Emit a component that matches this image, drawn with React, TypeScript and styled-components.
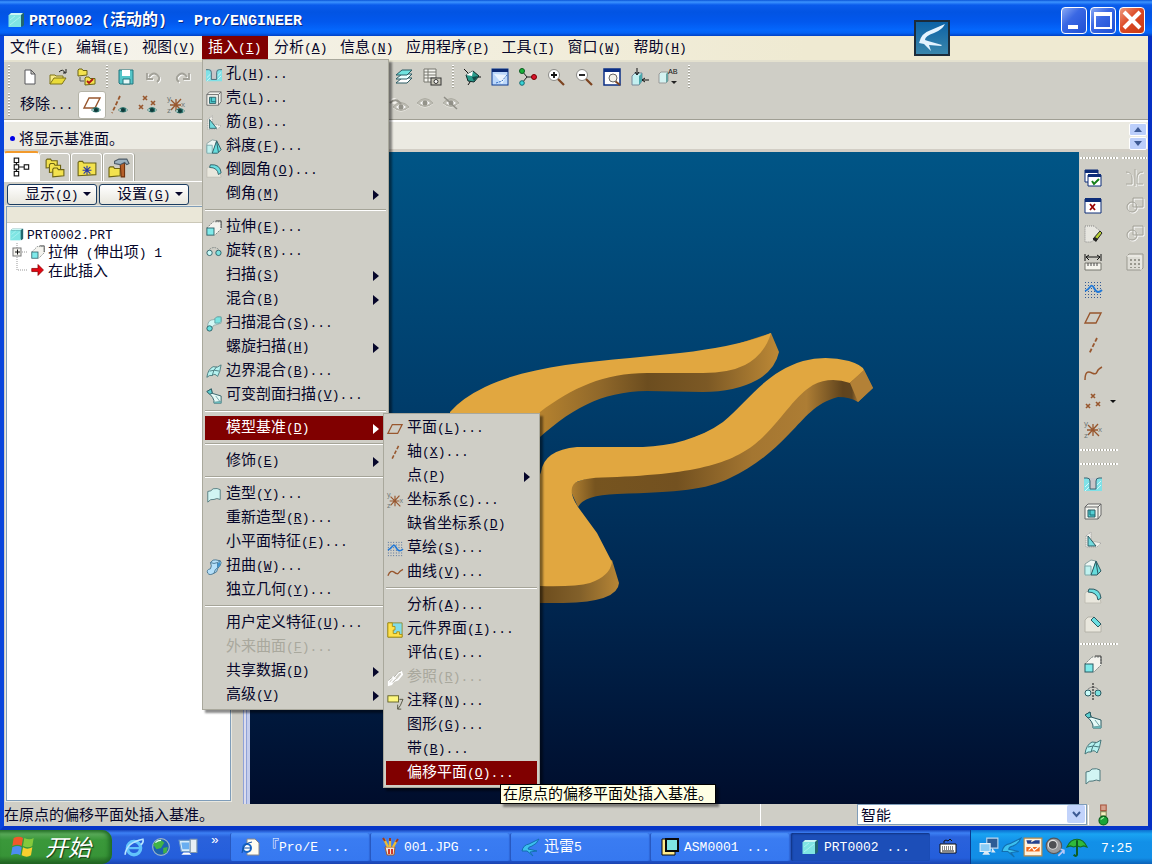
import React from "react";
import styled, { createGlobalStyle, css } from "styled-components";

const face = "#cfcec6";
const maroon = "#800000";
const ink = "#06062a";

const GlobalStyle = createGlobalStyle`
  * { box-sizing: border-box; }
  body {
    margin: 0;
    background: ${face};
    color: ${ink};
    font-family: "Noto Sans CJK SC", sans-serif;
    font-size: 15px;
    line-height: 20px;
  }
  button, select { font: inherit; color: inherit; margin: 0; padding: 0; border: 0; background: none; }
  ul { list-style: none; margin: 0; padding: 0; }
  svg { display: block; flex: none; }
`;

/* ---------- text with half-width latin and underlined access keys ---------- */

const Latin = styled.span<{ $size?: number }>`
  font-family: "Liberation Mono", monospace;
  font-size: ${(p) => p.$size ?? 13}px;
  white-space: pre;
`;

function Label({ text, size }: { text: string; size?: number }) {
  const runs = text.split(/([\u3001-\uffef]+)/).filter(Boolean);
  return (
    <span>
      {runs.map((run, i) => {
        if (/^[\u3001-\uffef]/.test(run)) return run;
        const at = run.indexOf("&");
        return (
          <Latin key={i} $size={size}>
            {at < 0 ? run : (
              <>
                {run.slice(0, at)}
                <u>{run[at + 1]}</u>
                {run.slice(at + 2)}
              </>
            )}
          </Latin>
        );
      })}
    </span>
  );
}

/* ---------- icons, all on an 18 unit grid ---------- */

const teal = "#7fe5e3";
const line = "#2b5a62";
const brown = "#98572e";
const eye = (x: number, y: number) => (
  <g>
    <path d={`M${x - 5} ${y}q5-6 10 0q-5 5-10 0z`} fill="#2f7770" />
    <circle cx={x} cy={y} r="2" fill="#103a3a" />
    <path d={`M${x - 4} ${y}h2M${x + 3} ${y}h1`} stroke="#fff" />
  </g>
);
const greyEye = (x: number, y: number) => (
  <g>
    <path d={`M${x - 8} ${y + 1}q8-9 16 0q-8 7-16 0z`} fill="#f4f3ee" />
    <path d={`M${x - 8} ${y}q8-9 16 0q-8 7-16 0z`} fill="#bdbcb3" stroke="#aeada3" />
    <path d={`M${x - 5} ${y}l3-2v4zM${x + 5} ${y}l-3-2v4z`} fill="#fff" />
    <circle cx={x} cy={y} r="2.500" fill="#94938a" />
  </g>
);
const cross = (x: number, y: number) => (
  <path d={`M${x - 2} ${y - 2}l4 4m0-4l-4 4`} stroke={brown} strokeWidth="1.600" />
);
const dots = (
  <g fill="#375c95">
    {[1, 4, 7, 10, 13, 16].flatMap((x) => [1, 4, 7, 10, 13, 16].map((y) => <rect key={`${x}-${y}`} x={x} y={y} width="1" height="1" />))}
  </g>
);
const folder = (x: number, y: number, w = 10, h = 7) => (
  <path d={`M${x} ${y + h}v-${h + 1}l1-1h3l1 1.500h${w - 5}v${h - 0.5}z`} fill="#f3e24e" stroke="#6d6414" />
);
const axisLetter = { fontFamily: "Liberation Sans, sans-serif", fontSize: 8, fill: "#6f7a7a" };
const csys = (
  <g fill="none">
    <path d="M4 4l11 11M14 3L4 14M3 9h11M9 3v12" stroke={brown} strokeWidth="1.300" />
    <text x="0" y="5" {...axisLetter}>y</text>
    <text x="14" y="11" {...axisLetter}>x</text>
    <text x="0" y="17" {...axisLetter}>z</text>
  </g>
);

const drawings: Record<string, React.ReactNode> = {
  part: <><path d="M2 4l2-2h13v12l-2 2z" fill="#22686e" /><path d="M2 4l2-2h12l-2 2z" fill="#c9f6f4" /><rect x="1.500" y="4" width="12.500" height="12" fill={teal} /><path d="M3 14L13 6M3 9l5-4" stroke="#a9f3f1" /></>,
  file: <path d="M4 2h6l4 4v10H4zM10 2v4h4" fill="#fff" stroke="#56565a" />,
  open: <><path d="M1 16V7h5l1 1h7v2" fill="#f7ea87" stroke="#7e7418" /><path d="M1 16l4-6h12l-4 6z" fill="#eadb38" stroke="#7e7418" /><path d="M10 4q4-4 6 1M14 5h3V1" fill="none" stroke="#202020" /></>,
  folders: <>{folder(1, 3, 9, 5)}{folder(8, 11, 10, 6)}<path d="M3 9v4h4" stroke="#555" fill="none" /><path d="M10 13l2 2 4-4" stroke="#b01212" strokeWidth="1.800" fill="none" /></>,
  save: <><path d="M2 2h14v14H3l-1-1z" fill="#55c5c8" stroke="#22777f" /><path d="M5 2h8v6H5z" fill="#fff" /><path d="M6 11h7v5H6z" fill="#e6f8f8" stroke="#22777f" /></>,
  undo: <><path d="M5 10q5-7 10 0q1 3-2 5M3 6v6h6" fill="none" stroke="#fff" strokeWidth="1.500" /><path d="M4 9q5-7 10 0q1 3-2 5M2 5v6h6" fill="none" stroke="#a3a299" strokeWidth="1.800" /></>,
  redo: <><path d="M15 10Q10 3 5 10q-1 3 2 5M17 6v6h-6" fill="none" stroke="#fff" strokeWidth="1.500" /><path d="M14 9Q9 2 4 9q-1 3 2 5M16 5v6h-6" fill="none" stroke="#a3a299" strokeWidth="1.800" /></>,
  plane: <path d="M6 4h11l-5 10H1z" fill="none" stroke={brown} strokeWidth="1.400" />,
  planeEye: <><path d="M6 2h11l-5 10H1z" fill="none" stroke={brown} strokeWidth="1.400" />{eye(13, 14)}</>,
  axis: <path d="M13 1L5 17" stroke={brown} strokeWidth="1.800" strokeDasharray="4 2" />,
  axisEye: <><path d="M9 0L1 17" stroke={brown} strokeWidth="1.800" strokeDasharray="4 2" />{eye(12, 14)}</>,
  points: <>{cross(9, 3)}{cross(4, 13)}{cross(14, 11)}</>,
  pointsEye: <>{cross(6, 2)}{cross(2, 11)}{cross(14, 7)}{eye(13, 14)}</>,
  csys,
  csysEye: <>{csys}{eye(13, 15)}</>,
  layers: <g stroke={line}><path d="M1 15l6-5h10l-5 5z" fill="#fff" /><path d="M1 11l6-5h10l-5 5z" fill="#e9ffff" /><path d="M1 7l6-5h10l-5 5z" fill="#6fe3df" /></g>,
  sheet: <><path d="M1 1h12v13H1zM1 4h12M1 7h12M1 10h12M5 1v13" fill="#f5f5f0" stroke="#77776f" /><rect x="8" y="10" width="10" height="7" fill="#c7c6b8" stroke="#333" /><circle cx="13" cy="13.500" r="2" fill="#fff" stroke="#333" /></>,
  spin: <><path d="M1 1l5 5M12 9h6M5 17l4-6" stroke="#111" /><path d="M3 7l7-4 6 5-5 6-6-1z" fill="#2a9a8b" stroke="#102a2a" /><path d="M3 7l7-4-1 5z" fill="#fff" /><path d="M9 9l6-1-4 5z" fill="#124a48" /></>,
  sketchView: <><rect x="1" y="1" width="16" height="16" fill="#bcd8fb" stroke="#0b3a94" /><path d="M1 1h16v3H1z" fill="#0b2a74" /><path d="M3 6l8 10 5-9" fill="#eaf4ff" /><path d="M5 15l6-2 5-6" stroke="#3772c4" fill="none" strokeDasharray="2 1" /></>,
  orient: <><path d="M3 3l5 6-5 6M8 9h8" stroke="#222" fill="none" /><circle cx="3" cy="3" r="2.500" fill="#18b238" stroke="#0b5a20" /><circle cx="15" cy="9" r="2.500" fill="#d8142c" stroke="#700" /><circle cx="3" cy="15" r="2.300" fill="#39d4d8" stroke="#156a70" /></>,
  zoomIn: <><path d="M10 10l7 7" stroke="#7d4420" strokeWidth="2.200" /><circle cx="7" cy="7" r="5.500" fill="#fff" stroke="#8c8c88" /><path d="M4 7h6M7 4v6" stroke="#111" strokeWidth="1.800" /></>,
  zoomOut: <><path d="M10 10l7 7" stroke="#7d4420" strokeWidth="2.200" /><circle cx="7" cy="7" r="5.500" fill="#fff" stroke="#8c8c88" /><path d="M4 7h6" stroke="#111" strokeWidth="1.800" /></>,
  refit: <><rect x="1" y="1" width="16" height="16" fill="#fff" stroke="#0b2f86" strokeWidth="1.500" /><path d="M1 1h16v3H1z" fill="#0b2f86" /><path d="M12 13l5 4" stroke="#7d4420" strokeWidth="2" /><circle cx="10" cy="10" r="4" fill="#f2f2ea" stroke="#666" /></>,
  reorient: <><path d="M1 8l3-3h7v8l-3 4H1z" fill="#c3eff0" stroke="#789" /><path d="M8 8l3-3v8l-3 4z" fill="#4aa7aa" /><path d="M6 0v6M4 4l2 3 2-3M18 12h-6M14 10l-3 2 3 2" fill="none" stroke="#111" /></>,
  saved: <><path d="M0 6l2-2h7v9l-2 2H0z" fill="#d4f2f1" stroke="#999" /><path d="M7 6l2-2v9l-2 2z" fill="#69a5a4" /><text x="9" y="6" fontFamily="Liberation Mono, monospace" fontSize="8" fill="#222">AB</text><path d="M12 13h6l-3 3z" fill="#222" /></>,
  people: <>{greyEye(11, 11)}<circle cx="4" cy="5" r="3" fill="#f4f3ee" /><path d="M0 7q6-6 11 1" fill="none" stroke="#99988f" strokeWidth="2" /></>,
  eyeGrey: greyEye(9, 7),
  eyeOff: <>{greyEye(9, 7)}<path d="M2 1l13 12" stroke="#8f8e86" strokeWidth="1.500" /></>,
  tree: <g fill="#fff" stroke="#111"><path d="M4 4v9M4 9h7" /><rect x="2" y="1" width="4" height="4" /><rect x="2" y="7" width="4" height="4" /><rect x="2" y="13" width="4" height="4" /><rect x="11" y="7" width="4" height="4" /></g>,
  stack: <>{folder(1, 3, 10, 6)}{folder(4, 7, 10, 6)}{folder(7, 11, 10, 6)}</>,
  favorite: <>{folder(1, 5, 16, 11)}<path d="M9 7v8M5 11h8M6 8l6 6M12 8l-6 6" stroke="#2637a8" /></>,
  hammer: <>{folder(0, 10, 10, 7)}<path d="M10 5h4v12h-3z" fill="#b5602a" stroke="#70330f" /><path d="M5 3l4-2h7l2 4-2 1-2-2-4 2-5-1z" fill="#9db2c0" stroke="#4c5a66" /></>,
  hole: <><path d="M0 3h6v13H0zM12 3h6v13h-6zM6 14h6v2H6z" fill="#7fe1e7" /><path d="M1 12l4-4M1 16l4-4M13 10l4-4M13 14l4-4" stroke="#d5f8fa" /><path d="M3 3q3 0 3 3v8h6V6q0-3 3-3z" fill="#c8c6c9" /><path d="M0 3h3q3 0 3 3v8h6V6q0-3 3-3h3" stroke="#3c6270" /></>,
  shell: <><path d="M1 4l3-3h13v11l-3 4H1z" fill="#f1f2ec" stroke="#666" /><path d="M1 4h13v12M14 4l3-3" fill="none" stroke="#666" /><path d="M4 7h7v7H4z" fill="#54cfd3" stroke="#2b5a62" /><path d="M6 7v5h5" fill="none" stroke="#1b6d75" /></>,
  rib: <><path d="M2 5l5-4v9l10 2-4 4H2z" fill="#f2f1eb" stroke="#999" strokeDasharray="1 1" /><path d="M4 5v10h8z" fill="#74dbde" stroke={line} /></>,
  draft: <><path d="M1 5l6-4 5 1-4 13H1z" fill="#eef6f3" stroke="#8aa2a2" /><path d="M1 7h6v9H1z" fill="#bff1ef" stroke="#7da9aa" /><path d="M7 16L12 2l5 10-4 4z" fill="#66dcdc" stroke={line} strokeLinejoin="round" /><path d="M12 3l2 12" stroke={line} /></>,
  round: <><path d="M1 6l4-3q9-1 11 8l1 5H1z" fill="#e9e7dd" stroke="#c0beb4" /><path d="M5 2q11-1 12 9l-3 2Q13 5 4 5z" fill="#6cdfe2" stroke={line} strokeLinejoin="round" /></>,
  chamfer: <><path d="M1 5l3-3h6l7 7v8H1z" fill="#e9e7dd" stroke="#b4b2a8" /><path d="M10 2l7 7-3 3-7-7z" fill="#6cdfe2" stroke={line} /></>,
  extrude: <><path d="M1 9l7-7h9v8l-7 7" fill="#f4f3ee" stroke="#78807e" strokeDasharray="2 1" /><path d="M11 1h6v8" fill="none" stroke="#444" /><rect x="1" y="9" width="8" height="8" fill="#7feaea" stroke={line} /></>,
  revolve: <><circle cx="4" cy="10" r="3" fill="#c9fbf9" stroke={line} /><circle cx="14" cy="10" r="3" fill="#7be1df" stroke={line} /><path d="M4 6q5-4 10 0" fill="none" stroke="#77807e" strokeDasharray="2 1" /></>,
  revolveAxis: <><circle cx="4" cy="10" r="3" fill="#c9fbf9" stroke={line} /><circle cx="14" cy="10" r="3" fill="#7be1df" stroke={line} /><path d="M4 6q5-4 10 0" fill="none" stroke="#888" /><path d="M9 0v18" stroke="#111" strokeDasharray="2 1" /></>,
  sweptBlend: <><path d="M2 13Q1 4 9 4l5-3 3 1v6l-6 2q-4 0-5 6z" fill="#d4f8f5" stroke="#8fa8a8" /><path d="M10 3l2-2h5v5l-2 2h-5z" fill="#79e4e1" stroke="#5e9c9e" /><circle cx="4" cy="14" r="3" fill="#66e0df" stroke={line} /></>,
  boundary: <><path d="M1 15q1-9 7-12 5 2 9-2-1 8-4 13-3-4-6-1-3-1-6 2z" fill="#b5f2f0" stroke="#44767a" strokeLinejoin="round" /><path d="M4 8q5-2 11 0M12 3q-4 4-5 10" stroke="#44767a" /></>,
  varSweep: <><path d="M1 4l5-3 1 5 10 3v8H9q1-6-8-13z" fill="#e5f9f6" stroke={line} strokeLinejoin="round" /><path d="M1 4l5-3 1 5-3 1z" fill="#5ccfd0" stroke={line} strokeLinejoin="round" /><path d="M9 16l8-1v2H9zM11 9l6 8" fill="#5ccfd0" stroke="#6fa3a5" /></>,
  style: <path d="M2 5q4 0 6-3 5-1 8 1v11q-4-2-7 0-4-1-7 3z" fill="#d1f5f3" stroke="#4f787c" strokeLinejoin="round" />,
  warp: <><path d="M5 4q3-4 6-3l5 1q2 2 0 5l-3 4q0 4-4 5-5 3-7 0-2-4 3-5 2-3 0-7z" fill="#b5e0fa" stroke="#42718e" strokeLinejoin="round" /><path d="M5 4q4 2 8 0l3-2M13 4v6q-3 1-4 6" fill="none" stroke="#42718e" /><path d="M13 5l3-2v4l-3 3z" fill="#3f93ce" /></>,
  sketch: <>{dots}<path d="M1 10q3-1 5-4t4 1 4 4 4-2" fill="none" stroke="#1f78d8" strokeWidth="1.800" /></>,
  curve: <path d="M1 12q3-7 7-4t5 1 5-4" fill="none" stroke={brown} strokeWidth="1.500" />,
  curveTall: <path d="M1 15q0-11 7-7 4 2 5-1t5-5" fill="none" stroke={brown} strokeWidth="1.500" />,
  component: <><path d="M1 1h16v16H1z" fill="#7fdcea" stroke="#8e8a2a" /><path d="M1 1h5v4h3v4H7v4h4v-2h3v3h3v3H1z" fill="#ffe14a" stroke="#a58c12" /></>,
  link: <g fill="none"><path d="M3 16l5-6M8 9l5-6 3-1 1 3-5 6-3 1zM2 12l5-4 2 2-4 6-3 1z" stroke="#fff" strokeWidth="2" /><path d="M1 12l5-4M8 8l5-6 3-1M6 14l4-4" stroke="#aaa99f" /></g>,
  note: <><rect x="1" y="2" width="12" height="7" fill="#fdf77e" stroke="#5b5b22" /><path d="M14 6h4l-3 7-3 4M12 12v5h4" fill="none" stroke="#4d4d3a" /></>,
  windows: <><path d="M1 1h13v12H1z" fill="#fff" stroke="#0d2d78" /><path d="M1 1h13v3H1z" fill="#0d2d78" /><path d="M4 6h13v11H4z" fill="#fff" stroke="#0d2d78" /><path d="M4 5h13v3H4z" fill="#0d2d78" /><path d="M8 12l2 3 5-5" fill="none" stroke="#168018" strokeWidth="2" /></>,
  closeWin: <><path d="M1 2h16v14H1z" fill="#fff" stroke="#0d2d78" /><path d="M1 1h16v4H1z" fill="#0d2d78" /><path d="M6 7l5 6m0-6l-5 6" stroke="#900" strokeWidth="1.800" /></>,
  erase: <><path d="M1 1h9l6 5-3 7-6 4H1z" fill="#e7e6e0" stroke="#888" strokeDasharray="1 1" /><path d="M9 14l7-8 2 2-6 8z" fill="#b6cf31" stroke="#222" /><path d="M9 14l2-2 3 2-2 3z" fill="#222" /></>,
  measure: <><path d="M1 1v7M17 1v7M2 4h14M5 2L2 4l3 3M13 2l3 2-3 3" stroke="#111" fill="none" /><path d="M1 10h16v7H1z" fill="#f6f5ee" stroke="#77776f" /><path d="M4 10v3M7 10v3M10 10v3M13 10v3" stroke="#444" /></>,
  mirror: <g fill="none"><path d="M1 4q6 0 6 6v6H1M18 4q-6 0-6 6v6h6M10 1v17" stroke="#fff" /><path d="M0 3q6 0 6 6v6H0M17 3q-6 0-6 6v6h6M9 0v17" stroke="#aaa99f" /></g>,
  merge: <g fill="none"><circle cx="7" cy="11" r="5" stroke="#fff" /><path d="M8 2h10v9H8z" stroke="#fff" /><circle cx="6" cy="10" r="5" stroke="#a3a299" /><path d="M7 1h10v9H7z" stroke="#a3a299" /></g>,
  pattern: <><path d="M1 3l2-2h14v14l-2 2H1z" fill="#dddcd5" stroke="#99988f" /><path d="M1 3h14v14" stroke="#f6f5f0" /><g fill="#99988f"><path d="M4 6h2v2H4zM8 6h2v2H8zM12 6h2v2h-2zM4 10h2v2H4zM8 10h2v2H8zM12 10h2v2h-2zM4 14h2v1H4zM8 14h2v1H8zM12 14h2v1h-2z" /></g></>,
  insertHere: <path d="M1 7h8V2l7 7-7 7v-5H1z" fill="#e30613" stroke="#8c0000" />,
  ie: <><circle cx="9" cy="10" r="6" fill="none" stroke="#62c3fb" strokeWidth="3" /><path d="M4 10h11" stroke="#62c3fb" strokeWidth="2" /><path d="M1 16Q2 5 17 2q1 3-2 5" fill="none" stroke="#b8e4ff" strokeWidth="1.500" /></>,
  globe: <><circle cx="9" cy="9" r="7.500" fill="#1b62b0" stroke="#9fb7c9" /><path d="M3 5l5-3 4 3-3 5-4 1-3-4zM11 10l4-1-1 5-3 1z" fill="#41b345" /><path d="M4 5q2-2 5-2" stroke="#e7ffff" fill="none" /></>,
  desktop: <><path d="M1 3h10v10H3z" fill="#d7ecfb" stroke="#6f9cc9" /><path d="M3 5h7v6H4z" fill="#69aef0" /><path d="M11 2h6v12h-6z" fill="#e6eef5" stroke="#8299ae" /><path d="M3 16h9l-2-2H5z" fill="#fff" /></>,
  iePage: <><path d="M6 1h8l4 4v12H6z" fill="#fffdf2" stroke="#888" /><circle cx="6" cy="10" r="4" fill="#fff" stroke="#1666c8" strokeWidth="2" /><path d="M2 10h8M1 15Q2 5 11 4" stroke="#0f4ea6" fill="none" /></>,
  brushes: <><path d="M4 9h10l-1 8H6z" fill="#f3e3d3" stroke="#a05a2a" /><path d="M7 9L3 1M9 9V1M12 9l4-7" stroke="#e8bd38" strokeWidth="2.400" /><path d="M4 3L2 0M9 3V0M15 4l2-3" stroke="#a33a1a" strokeWidth="2" /><path d="M8 11v5M11 11v5" stroke="#d1382b" strokeWidth="2" /></>,
  swallow: <path d="M1 13Q2 7 8 6L18 1q-2 5-7 7-4 1-4 3l9 2-7 1 3 4-6-5z" fill="#3cc0ee" stroke="#126fb0" />,
  asm: <><path d="M1 1h4v12h9v4H1z" fill="#ffeb8a" stroke="#0a0a0a" /><path d="M5 1h12v12H5z" fill={teal} stroke="#0a0a0a" strokeWidth="2" /></>,
  keyboard: <><path d="M1 6h16v9H1z" fill="#fff" stroke="#111" /><path d="M3 9h12M3 11h12" stroke="#111" strokeDasharray="1 1" /><path d="M3 13h12M5 5V3l2-1 2 1 2-2 2 2" stroke="#111" fill="none" /></>,
  network: <><path d="M7 1h10v9H7z" fill="#2d5c94" stroke="#bed8ed" /><path d="M1 6h9v7H1z" fill="#8cccf5" stroke="#e0effb" /><path d="M3 16h7l-2-3H5zM12 10l3 4h-4z" fill="#dce9f4" /></>,
  chat: <><path d="M1 1h16v16H1z" fill="#fff3df" stroke="#b98a48" /><path d="M3 3h5l-1 2 4-2h4v3H4z" fill="#24428e" /><path d="M3 9h12v4H3z" fill="#f16a1e" /><path d="M5 12l3-3 2 3 4-3" stroke="#fff" fill="none" /></>,
  speaker: <><circle cx="8" cy="8" r="7" fill="#9a9a9c" stroke="#53555c" /><circle cx="7" cy="7" r="4" fill="#4f5054" stroke="#e1e1e1" /><path d="M12 17l5-5M14 11l3 1v3" stroke="#b9c9f7" fill="none" strokeWidth="1.500" /></>,
  umbrella: <><path d="M0 9Q3 2 9 2t9 7l-3-1-3 1-3-1-3 1-3-1z" fill="#2fba3b" stroke="#146b22" /><path d="M9 3v13q-1 2-3 0" stroke="#0d5d21" fill="none" strokeWidth="1.800" /></>,
  flag: <><path d="M2 3q4-2 7 0L8 9Q5 7 1 9z" fill="#f0582a" /><path d="M10 3q4 2 7 0l-1 6q-3 2-7 0z" fill="#85c93c" /><path d="M1 10q4-2 7 0l-1 6q-3-2-7 0z" fill="#4c8df0" /><path d="M9 10q3 2 7 0l-1 6q-3 2-7 0z" fill="#f8cf2e" /></>,
  lamp: <><rect x="6" y="0" width="5" height="5" fill="#d5a08c" stroke="#a95942" /><path d="M6 6h5v4H6z" fill="#f3efc0" stroke="#8a8862" /><circle cx="8.500" cy="14" r="4" fill="#19a33a" stroke="#075c1a" /><path d="M6 13l3-2" stroke="#a7f0a7" /></>,
};

function Icon({ name, size = 18 }: { name: string; size?: number }) {
  return (
    <svg width={size} height={size} viewBox="0 0 18 18" fill="none" overflow="visible" aria-hidden="true">
      {drawings[name]}
    </svg>
  );
}

/* ---------- window chrome ---------- */

const Desktop = styled.div`
  min-height: 100vh;
  display: flex;
  flex-direction: column;
  overflow: hidden;
`;
const Window = styled.div`
  flex: 1;
  display: flex;
  flex-direction: column;
  background: #0a46dc;
`;
const Frame = styled.div`
  flex: 1;
  display: flex;
  flex-direction: column;
  border: solid #0845dc;
  border-width: 0 4px 4px;
  border-right-color: #0530c4;
  border-bottom-color: #0636c8;
  background: ${face};
`;
const TitleBar = styled.header`
  position: relative;
  height: 36px;
  display: flex;
  align-items: center;
  gap: 3px;
  padding: 4px 7px 0;
  background: linear-gradient(#0a55d8 0, #3c94ff 2px, #0a5cec 5px, #0254e3 12px, #0258ee 22px, #0467fd 30px, #0462f4 33px, #0040c4 36px);
`;
const Title = styled.h1`
  flex: 1;
  margin: 0;
  padding-left: 1px;
  color: #fff;
  font-size: 16px;
  font-weight: 700;
  line-height: 20px;
  text-shadow: 1px 1px 0 #0a2a80;
`;
const Caption = styled.button<{ $close?: boolean }>`
  width: 26px;
  height: 27px;
  display: grid;
  place-items: center;
  border: 1px solid #fff;
  border-radius: 4px;
  background: ${(p) => (p.$close ? "linear-gradient(135deg, #ee9a7e, #dc4a26 45%, #c83a12)" : "linear-gradient(135deg, #8aaaf4, #3a68e4 40%, #1f50d4)")};
`;
const DropBadge = styled.div`
  position: absolute;
  top: 20px;
  right: 202px;
  z-index: 3;
  width: 36px;
  height: 36px;
  border: 2px solid #1c2b3a;
  background: linear-gradient(#0c62a6, #3a86ac);
`;

const MenuBar = styled.ul`
  display: flex;
  height: 26px;
  background: linear-gradient(100deg, #f6f4ee, #efead2 70%);
  box-shadow: inset 0 -2px 0 #e4e1cf;
`;
const MenuBarItem = styled.li`
  position: relative;
`;
const MenuBarButton = styled.button<{ $open?: boolean }>`
  min-width: 66px;
  height: 23px;
  padding: 0 6px;
  text-align: left;
  white-space: nowrap;
  ${(p) => p.$open && css`background: ${maroon}; color: #fff;`}
`;
const Popup = styled.ul<{ $sub?: boolean }>`
  position: absolute;
  z-index: 5;
  top: ${(p) => (p.$sub ? -3 : 23)}px;
  left: ${(p) => (p.$sub ? 178 : 0)}px;
  width: ${(p) => (p.$sub ? 157 : 187)}px;
  padding: 2px;
  border: 1px solid #a9a89c;
  background: ${face};
  box-shadow: 3px 3px 2px rgba(0, 0, 0, 0.45);
`;
const Entry = styled.li`
  position: relative;
`;
const Command = styled.button<{ $active?: boolean }>`
  width: 100%;
  height: 24px;
  display: grid;
  grid-template-columns: 20px 1fr 6px;
  align-items: center;
  padding: 0 7px 2px 1px;
  text-align: left;
  white-space: nowrap;
  ${(p) => p.$active && css`background: ${maroon}; color: #fff;`}
  &:disabled { color: #a9a89d; }
  svg { margin-top: 2px; }
`;
const Divider = styled.li`
  height: 2px;
  margin: 3px 0 4px;
  border-top: 1px solid #a5a498;
  border-bottom: 1px solid #fff;
`;
const Tooltip = styled.div`
  position: absolute;
  z-index: 6;
  top: 23px;
  left: 114px;
  padding: 0 2px;
  height: 20px;
  line-height: 16px;
  white-space: nowrap;
  color: #000;
  background: #ffffe4;
  border: 1px solid #000;
  box-shadow: 3px 3px 2px rgba(0, 0, 0, 0.4);
`;

type Item = { text: string; icon?: string; more?: boolean; off?: boolean } | null;

const datumItems: Item[] = [
  { text: "平面(&L)...", icon: "plane" },
  { text: "轴(&X)...", icon: "axis" },
  { text: "点(&P)", more: true },
  { text: "坐标系(&C)...", icon: "csys" },
  { text: "缺省坐标系(&D)" },
  { text: "草绘(&S)...", icon: "sketch" },
  { text: "曲线(&V)...", icon: "curve" },
  null,
  { text: "分析(&A)..." },
  { text: "元件界面(&I)...", icon: "component" },
  { text: "评估(&E)..." },
  { text: "参照(&R)...", icon: "link", off: true },
  { text: "注释(&N)...", icon: "note" },
  { text: "图形(&G)..." },
  { text: "带(&B)..." },
  { text: "偏移平面(&O)..." },
];

const insertItems: Item[] = [
  { text: "孔(&H)...", icon: "hole" },
  { text: "壳(&L)...", icon: "shell" },
  { text: "筋(&B)...", icon: "rib" },
  { text: "斜度(&F)...", icon: "draft" },
  { text: "倒圆角(&O)...", icon: "round" },
  { text: "倒角(&M)", more: true },
  null,
  { text: "拉伸(&E)...", icon: "extrude" },
  { text: "旋转(&R)...", icon: "revolve" },
  { text: "扫描(&S)", more: true },
  { text: "混合(&B)", more: true },
  { text: "扫描混合(&S)...", icon: "sweptBlend" },
  { text: "螺旋扫描(&H)", more: true },
  { text: "边界混合(&B)...", icon: "boundary" },
  { text: "可变剖面扫描(&V)...", icon: "varSweep" },
  null,
  { text: "模型基准(&D)", more: true },
  null,
  { text: "修饰(&E)", more: true },
  null,
  { text: "造型(&Y)...", icon: "style" },
  { text: "重新造型(&R)..." },
  { text: "小平面特征(&F)..." },
  { text: "扭曲(&W)...", icon: "warp" },
  { text: "独立几何(&Y)..." },
  null,
  { text: "用户定义特征(&U)..." },
  { text: "外来曲面(&F)...", off: true },
  { text: "共享数据(&D)", more: true },
  { text: "高级(&V)", more: true },
];

function Menu({ items, activeIndex, sub, children }: { items: Item[]; activeIndex: number; sub?: boolean; children?: React.ReactNode }) {
  return (
    <Popup $sub={sub}>
      {items.map((item, i) =>
        item === null ? (
          <Divider key={i} />
        ) : (
          <Entry key={i}>
            <Command $active={i === activeIndex} disabled={item.off}>
              {item.icon ? <Icon name={item.icon} size={16} /> : <span />}
              <Label text={item.text} />
              {item.more && (
                <svg width="6" height="10" viewBox="0 0 6 10"><path d="M0 0v10l6-5z" fill="currentColor" /></svg>
              )}
            </Command>
            {i === activeIndex && children}
          </Entry>
        ),
      )}
    </Popup>
  );
}

/* ---------- tool bars ---------- */

const ToolBars = styled.div`
  height: 58px;
  padding: 1px 0 0 4px;
  border-bottom: 1px solid #a09f94;
`;
const ToolRow = styled.div`
  display: flex;
  height: 28px;
  align-items: center;
`;
const Grip = styled.i<{ $lead?: boolean }>`
  flex: none;
  width: ${(p) => (p.$lead ? 8 : 12)}px;
  height: 24px;
  background: repeating-linear-gradient(#fff 0 1px, #a5a498 1px 2px, transparent 2px 3px) no-repeat ${(p) => (p.$lead ? "0" : "6px")} 0 / 2px 24px;
`;
const Tool = styled.button<{ $pressed?: boolean; $narrow?: boolean }>`
  flex: none;
  width: ${(p) => (p.$narrow ? 26 : 28)}px;
  height: 28px;
  display: grid;
  place-items: center;
  ${(p) => p.$pressed && css`background: #fff; border: 1px solid #b5b4a8; border-radius: 3px;`}
`;
const ToolGap = styled.span<{ $w: number }>`
  flex: none;
  width: ${(p) => p.$w}px;
`;
const RemoveLabel = styled.button`
  width: 62px;
  padding: 0 0 4px 4px;
  height: 24px;
  text-align: left;
  white-space: nowrap;
`;

const MessageArea = styled.div`
  height: 32px;
  display: flex;
  align-items: center;
  gap: 4px;
  padding: 1px 1px 0 6px;
  background: #ebeae2;
  border-top: 2px solid #fff;
  border-bottom: 3px solid #d2cec5;
  p { flex: 1; margin: 0; padding-top: 3px; }
`;
const Bullet = styled.i`
  width: 5px;
  height: 5px;
  margin-top: 4px;
  border-radius: 50%;
  background: #0000e8;
`;
const Spin = styled.div`
  display: grid;
  gap: 1px;
  button {
    width: 18px;
    height: 13px;
    display: grid;
    place-items: center;
    border: 1px solid #fff;
    border-radius: 2px;
    background: #bccffb;
  }
`;

/* ---------- main area ---------- */

const Main = styled.main`
  flex: 1;
  display: flex;
  min-height: 480px;
`;
const Navigator = styled.aside`
  flex: none;
  width: 227px;
  display: flex;
  flex-direction: column;
  padding-bottom: 3px;
`;
const Tabs = styled.div`
  display: flex;
  align-items: flex-end;
  height: 30px;
  border-bottom: 1px solid #fff;
`;
const Tab = styled.button<{ $on?: boolean }>`
  width: ${(p) => (p.$on ? 35 : 31)}px;
  height: ${(p) => (p.$on ? 30 : 28)}px;
  margin-right: ${(p) => (p.$on ? 0 : 1)}px;
  display: grid;
  place-items: center;
  border: 1px solid #fff;
  border-bottom: 0;
  border-radius: 3px 3px 0 0;
  ${(p) => p.$on && css`background: #fff; border-top: 2px solid #f29a2c;`}
  ${(p) => !p.$on && css`box-shadow: 1px 0 0 #a9a89c;`}
`;
const NavButtons = styled.div`
  display: flex;
  gap: 2px;
  padding: 2px 3px 1px;
`;
const DropButton = styled.button`
  width: 90px;
  height: 21px;
  display: flex;
  align-items: center;
  gap: 5px;
  padding: 0 0 1px 17px;
  border: 1px solid #1b3c60;
  border-radius: 3px;
  background: linear-gradient(#fff, #e8e6dd);
  line-height: 18px;
  white-space: nowrap;
`;
const TreeBox = styled.div`
  flex: 1;
  display: flex;
  flex-direction: column;
  margin-left: 2px;
  border: 1px solid #7f9db9;
  outline: 1px solid #e9e8e0;
  background: #fff;
`;
const TreeHead = styled.div`
  height: 16px;
  background: #eae7d8;
  border-bottom: 1px solid #cbc8b8;
`;
const Tree = styled.ul`
  padding: 2px 0 0 2px;
  line-height: 18px;
  li {
    display: flex;
    align-items: center;
    gap: 3px;
    height: 18px;
    white-space: nowrap;
  }
`;
const Sash = styled.div`
  flex: none;
  width: 19px;
  background: linear-gradient(90deg, transparent 12px, #8ea2d8 12px 13px, #dcdcec 13px 15px, #8ea2d8 15px 16px, #c4cdec 16px 19px);
`;
const Viewport = styled.section`
  flex: 1;
  min-width: 0;
  background: linear-gradient(#005586, #003d6b 38%, #00254e 70%, #000d2c);
  svg { width: 100%; height: 100%; }
`;
const SideTools = styled.nav`
  flex: none;
  width: 69px;
  display: flex;
  justify-content: space-between;
`;
const SideColumn = styled.div<{ $w: number }>`
  width: ${(p) => p.$w}px;
`;
const SideRow = styled.div`
  display: flex;
  align-items: center;
`;
const SideGroup = styled.div`
  & + & { padding-top: 2px; }
`;
const SideGrip = styled.div`
  height: 12px;
  background: repeating-linear-gradient(90deg, #fff 0 2px, #a5a498 2px 3px) no-repeat 1px 5px / calc(100% - 2px) 2px;
`;

/* ---------- status bar and task bar ---------- */

const StatusBar = styled.footer`
  height: 22px;
  display: flex;
  align-items: center;
  line-height: 20px;
  p { flex: 1; margin: 0; padding-bottom: 3px; }
`;
const FilterBox = styled.label`
  position: relative;
  width: 328px;
  height: 22px;
  padding-left: 96px;
  border-left: 1px solid #fff;
  select {
    width: 230px;
    height: 21px;
    padding: 0 0 2px 3px;
    appearance: none;
    border: 1px solid #7f9db9;
    background: #fff;
  }
`;
const SelectArrow = styled.span`
  position: absolute;
  top: 1px;
  right: 3px;
  width: 18px;
  height: 18px;
  display: grid;
  place-items: center;
  border-radius: 2px;
  background: #c2d3fb;
  pointer-events: none;
`;
const Lamp = styled.div`
  width: 60px;
  padding-left: 5px;
  border-left: 1px solid #fff;
`;
const TaskBar = styled.nav`
  height: 34px;
  display: flex;
  background: linear-gradient(#1a48c0 0, #3c80f4 3px, #2a62dc 7px, #245edb 28px, #1b44b0);
  color: #fff;
`;
const Start = styled.button`
  flex: none;
  width: 112px;
  display: flex;
  align-items: center;
  gap: 10px;
  padding: 0 0 2px 11px;
  border-radius: 0 10px 10px 0;
  background: linear-gradient(#2f7a2f, #57a857 4px, #3a983a 10px, #379437 26px, #226022);
  box-shadow: inset -3px 0 4px #1f6a24;
  font-size: 23px;
  font-style: italic;
  line-height: 30px;
  text-shadow: 1px 1px 1px #163c16;
`;
const QuickLaunch = styled.div`
  flex: none;
  width: 118px;
  display: flex;
  align-items: center;
  gap: 7px;
  padding-left: 12px;
  button { width: 20px; height: 24px; }
  span { padding: 0 0 12px 6px; }
`;
const Tasks = styled.div`
  flex: 1;
  display: flex;
  align-items: center;
`;
const Task = styled.button<{ $on?: boolean }>`
  flex: 0 1 140px;
  height: 28px;
  display: flex;
  align-items: center;
  gap: 5px;
  padding: 0 0 1px 10px;
  border-radius: 2px;
  border-left: 1px solid #2858c0;
  white-space: nowrap;
  background: ${(p) => (p.$on ? "#1c4eb8" : "linear-gradient(#4e92fa, #3a7cf2 6px, #3678f0)")};
  box-shadow: ${(p) => (p.$on ? "inset 1px 1px 2px #0f3280" : "inset -1px 0 1px #2f66d8")};
`;
const ImeSlot = styled.button`
  flex: none;
  width: 36px;
  display: grid;
  place-items: center;
`;
const Tray = styled.div`
  flex: none;
  width: 182px;
  display: flex;
  align-items: center;
  gap: 2px;
  padding-left: 8px;
  border-left: 1px solid #0a3a90;
  background: linear-gradient(#0c6fd0, #1aa4f2 4px, #1290e8 12px, #128ee6 28px, #0c62b8);
  time { padding-left: 12px; }
`;

const Down = () => (
  <svg width="8" height="5" viewBox="0 0 8 5"><path d="M0 0h8l-4 4z" fill={ink} /></svg>
);

function Model() {
  return (
    <svg viewBox="250 152 829 652" preserveAspectRatio="xMidYMid slice" role="img" aria-label="PRT0002">
      <defs>
        <linearGradient id="upper" gradientUnits="userSpaceOnUse" x1="540" y1="0" x2="779" y2="0">
          <stop offset="0" stopColor="#b5822f" /><stop offset=".25" stopColor="#90682a" /><stop offset=".45" stopColor="#6c4d1f" /><stop offset=".7" stopColor="#7c5925" /><stop offset="1" stopColor="#bd8936" />
        </linearGradient>
        <linearGradient id="lower" gradientUnits="userSpaceOnUse" x1="571" y1="0" x2="873" y2="0">
          <stop offset="0" stopColor="#b18031" /><stop offset=".08" stopColor="#76541f" /><stop offset=".35" stopColor="#735120" /><stop offset=".6" stopColor="#a47631" /><stop offset=".78" stopColor="#ad7d34" /><stop offset=".9" stopColor="#60441d" /><stop offset=".93" stopColor="#604520" /><stop offset=".95" stopColor="#a77834" />
        </linearGradient>
        <linearGradient id="foot" gradientUnits="userSpaceOnUse" x1="540" y1="0" x2="620" y2="0">
          <stop offset="0" stopColor="#6c4c1d" /><stop offset=".5" stopColor="#82602a" /><stop offset="1" stopColor="#b98736" />
        </linearGradient>
      </defs>
      <path fill="url(#upper)" d="M771 333L779 352Q775 370 757 380Q735 392 703 392C685 392 665 391 647 391C600 392 571 408 530 446V400L600 366L700 356Z" />
      <path fill="#e1a740" d="M450 412Q462 398 485 387C525 368 575 363 630 358L680 353Q740 346 771 333Q765 354 745 365Q729 373 703 373L647 373C604 373 572 388 540 412L530 440H450Z" />
      <path fill="url(#lower)" d="M864 370L873 388L858 402Q850 397 838 397C815 403 805 418 790 433C770 454 752 468 730 478C705 490 680 492 617 494Q584 495 578 507L568 485L640 460L760 410L820 370Z" />
      <path fill="url(#foot)" d="M612 560L619 583Q618 602 563 603H530V580L590 570Z" />
      <path fill="#e1a740" d="M530 586V500L541 472Q544 450 577 447L643 447C670 446 699 439 723 422C748 401 766 372 803 361Q825 355 849 361Q862 365 864 370L850 383Q830 376 813 385C795 396 785 415 763 437C738 461 705 473 617 477Q584 477 575 483Q567 490 578 507L597 533L612 562Q610 576 590 583Q575 587 540 586Z" />
      <path fill="#b38137" d="M850 383L864 370L873 388L858 402Z" />
    </svg>
  );
}

const sideTop = ["windows", "closeWin", "erase", "measure", "sketch", "plane", "axis", "curveTall", "points", "csys"];
const sideMid = ["hole", "shell", "rib", "draft", "round", "chamfer"];
const sideLow = ["extrude", "revolveAxis", "varSweep", "boundary", "style"];
const menus = ["文件(&F)", "编辑(&E)", "视图(&V)", "插入(&I)", "分析(&A)", "信息(&N)", "应用程序(&P)", "工具(&T)", "窗口(&W)", "帮助(&H)"];

const tools = (names: string[], narrow = false) =>
  names.map((n) => <Tool key={n} $narrow={narrow} aria-label={n}><Icon name={n} /></Tool>);

export default function App() {
  return (
    <Desktop>
      <GlobalStyle />
      <Window>
        <TitleBar>
          <Icon name="part" />
          <Title><Label text="PRT0002 (活动的) - Pro/ENGINEER" size={15} /></Title>
          <Caption aria-label="最小化"><svg width="20" height="20"><path d="M4 15h10v4H4z" fill="#fff" /></svg></Caption>
          <Caption aria-label="最大化"><svg width="20" height="20"><path d="M2 3h16v15H2z" stroke="#fff" strokeWidth="2" fill="none" /><path d="M1 2h18v4H1z" fill="#fff" /></svg></Caption>
          <Caption $close aria-label="关闭"><svg width="20" height="20"><path d="M2 2l16 16M18 2L2 18" stroke="#fff" strokeWidth="4" /></svg></Caption>
          <DropBadge>
            <svg width="32" height="32" viewBox="0 0 32 32"><path d="M3 21Q5 11 15 8L29 2Q26 8 18 11Q9 14 9 18L12 19L26 23L25 24L13 23L15 29L8 22Z" fill="#e4f3ff" /></svg>
          </DropBadge>
        </TitleBar>
        <Frame>
          <MenuBar>
            {menus.map((m, i) => (
              <MenuBarItem key={m}>
                <MenuBarButton $open={i === 3}><Label text={m} /></MenuBarButton>
                {i === 3 && (
                  <Menu items={insertItems} activeIndex={16}>
                    <Menu items={datumItems} activeIndex={15} sub>
                      <Tooltip role="tooltip">在原点的偏移平面处插入基准。</Tooltip>
                    </Menu>
                  </Menu>
                )}
              </MenuBarItem>
            ))}
          </MenuBar>
          <ToolBars>
            <ToolRow>
              <Grip $lead />
              {tools(["file", "open", "folders"])}
              <Grip />
              {tools(["save", "undo", "redo"])}
              <ToolGap $w={194} />
              {tools(["layers", "sheet"])}
              <Grip />
              {tools(["spin", "sketchView", "orient", "zoomIn", "zoomOut", "refit", "reorient", "saved"])}
              <Grip />
            </ToolRow>
            <ToolRow>
              <Grip $lead />
              <RemoveLabel><Label text="移除..." /></RemoveLabel>
              <Tool $pressed aria-label="planeEye"><Icon name="planeEye" /></Tool>
              {tools(["axisEye", "pointsEye", "csysEye"])}
              <ToolGap $w={196} />
              {tools(["people", "eyeGrey", "eyeOff"], true)}
            </ToolRow>
          </ToolBars>
          <MessageArea>
            <Bullet />
            <p>将显示基准面。</p>
            <Spin>
              <button aria-label="上"><svg width="8" height="5"><path d="M0 5l4-5 4 5z" fill="#3d5a94" /></svg></button>
              <button aria-label="下"><svg width="8" height="5"><path d="M0 0l4 5 4-5z" fill="#3d5a94" /></svg></button>
            </Spin>
          </MessageArea>
          <Main>
            <Navigator>
              <Tabs>
                <Tab $on aria-label="模型树"><Icon name="tree" size={20} /></Tab>
                {["stack", "favorite", "hammer"].map((n) => (
                  <Tab key={n} aria-label={n}><Icon name={n} size={20} /></Tab>
                ))}
              </Tabs>
              <NavButtons>
                <DropButton><Label text="显示(&O)" /><Down /></DropButton>
                <DropButton><Label text="设置(&G)" /><Down /></DropButton>
              </NavButtons>
              <TreeBox>
                <TreeHead />
                <Tree>
                  <li><Icon name="part" size={15} /><Label text="PRT0002.PRT" /></li>
                  <li>
                    <svg width="19" height="18"><path d="M8 0v18M13 9h6" stroke="#999" strokeDasharray="1 1" /><rect x="4" y="5" width="8" height="8" fill="#f4f3ee" stroke="#777" /><path d="M6 9h5M8.500 6.500v5" stroke="#111" /></svg>
                    <Icon name="extrude" size={14} />
                    <Label text="拉伸 (伸出项) 1" />
                  </li>
                  <li>
                    <svg width="19" height="18"><path d="M8 0v9h11" fill="none" stroke="#999" strokeDasharray="1 1" /></svg>
                    <Icon name="insertHere" size={14} />
                    <Label text="在此插入" />
                  </li>
                </Tree>
              </TreeBox>
            </Navigator>
            <Sash />
            <Viewport><Model /></Viewport>
            <SideTools>
              <SideColumn $w={40}>
                <SideGroup>
                  <SideGrip />
                  {sideTop.map((n) => (
                    <SideRow key={n}>
                      <Tool aria-label={n}><Icon name={n} /></Tool>
                      {n === "points" && <svg width="12" height="4"><path d="M3 0h6l-3 3z" fill="#111" /></svg>}
                    </SideRow>
                  ))}
                  <SideGrip />
                </SideGroup>
                <SideGroup>
                  <SideGrip />
                  {tools(sideMid)}
                  <SideGrip />
                  {tools(sideLow)}
                </SideGroup>
              </SideColumn>
              <SideColumn $w={27}>
                <SideGrip />
                <Tool disabled aria-label="镜像"><Icon name="mirror" /></Tool>
                <Tool disabled aria-label="合并"><Icon name="merge" /></Tool>
                <Tool disabled aria-label="修剪"><Icon name="merge" /></Tool>
                <Tool disabled aria-label="阵列"><Icon name="pattern" /></Tool>
              </SideColumn>
            </SideTools>
          </Main>
          <StatusBar>
            <p>在原点的偏移平面处插入基准。</p>
            <FilterBox>
              <select aria-label="过滤器" defaultValue="智能"><option>智能</option></select>
              <SelectArrow><svg width="9" height="7"><path d="M1 1l3.500 4L8 1" fill="none" stroke="#3d5a94" strokeWidth="2" /></svg></SelectArrow>
            </FilterBox>
            <Lamp><Icon name="lamp" size={20} /></Lamp>
          </StatusBar>
        </Frame>
      </Window>
      <TaskBar>
        <Start><Icon name="flag" size={24} />开始</Start>
        <QuickLaunch>
          <button aria-label="Internet Explorer"><Icon name="ie" size={20} /></button>
          <button aria-label="网络"><Icon name="globe" size={20} /></button>
          <button aria-label="显示桌面"><Icon name="desktop" size={20} /></button>
          <Latin>»</Latin>
        </QuickLaunch>
        <Tasks>
          <Task><Icon name="iePage" /><Label text="『Pro/E ..." /></Task>
          <Task><Icon name="brushes" /><Label text="001.JPG ..." /></Task>
          <Task><Icon name="swallow" /><Label text="迅雷5" /></Task>
          <Task><Icon name="asm" /><Label text="ASM0001 ..." /></Task>
          <Task $on><Icon name="part" /><Label text="PRT0002 ..." /></Task>
          <ImeSlot aria-label="输入法"><Icon name="keyboard" /></ImeSlot>
        </Tasks>
        <Tray>
          {["network", "swallow", "chat", "speaker", "umbrella"].map((n) => <Icon key={n} name={n} size={20} />)}
          <time><Label text="7:25" /></time>
        </Tray>
      </TaskBar>
    </Desktop>
  );
}
